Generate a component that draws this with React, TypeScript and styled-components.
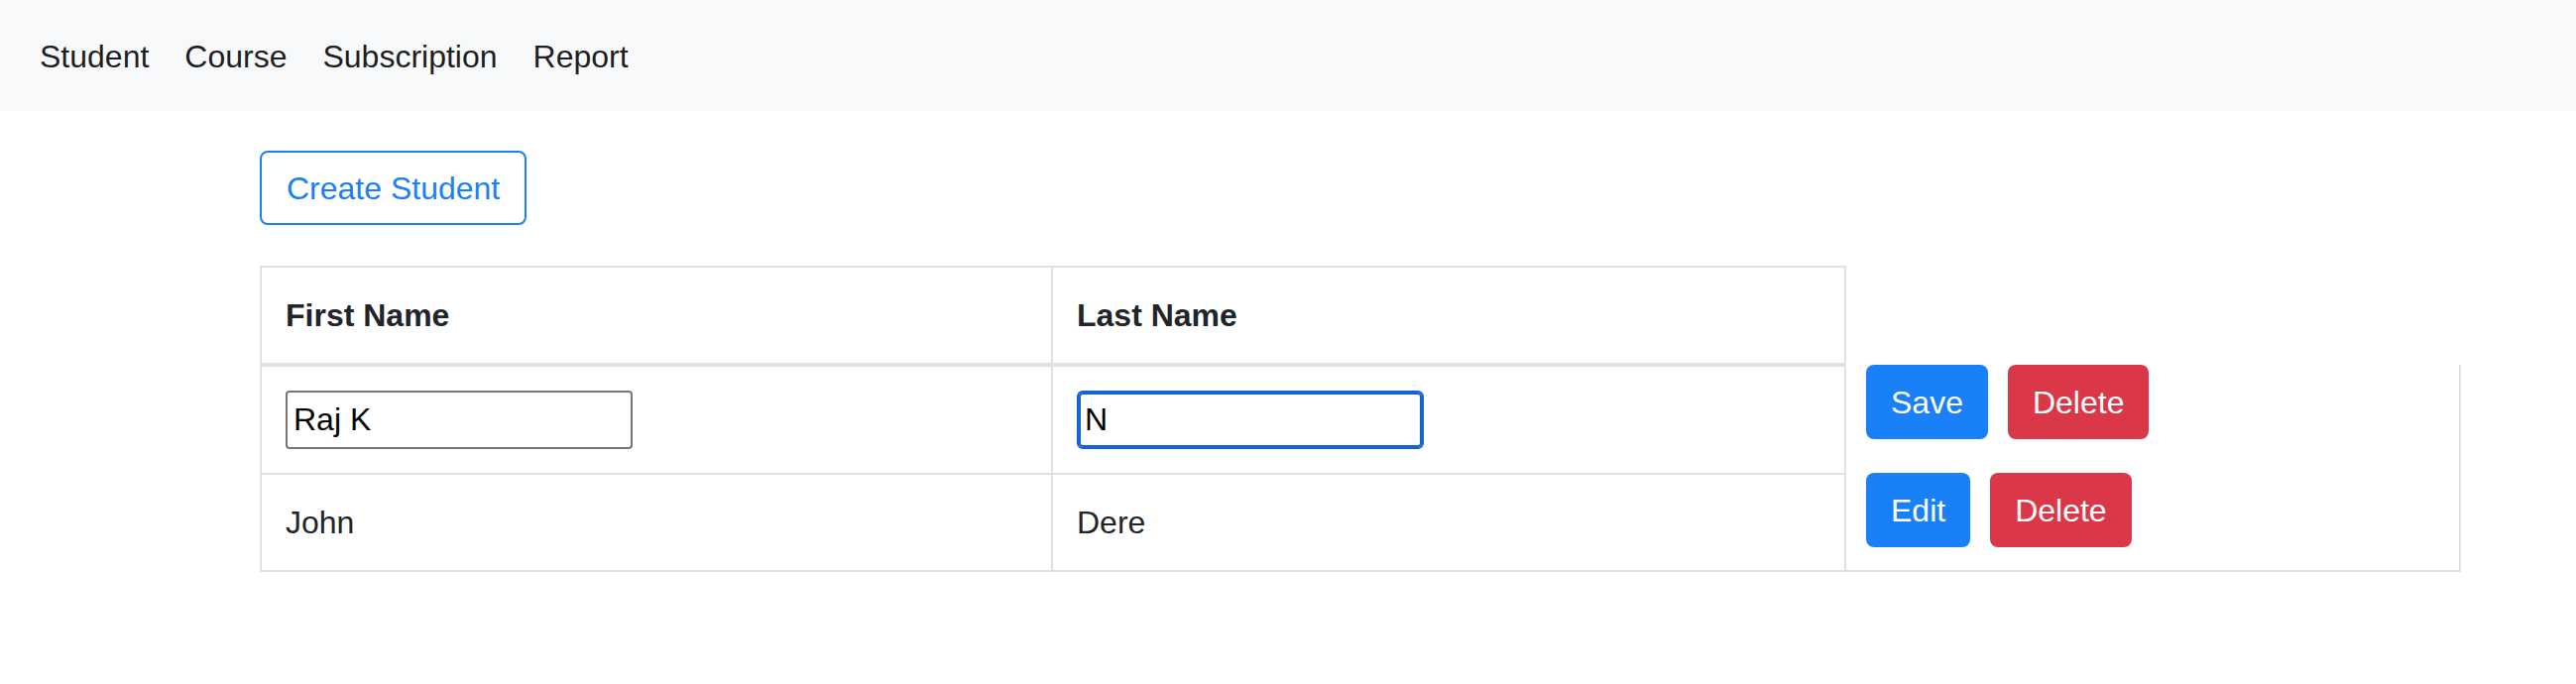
import React from 'react';
import styled, { createGlobalStyle } from 'styled-components';

interface Student {
  id: number;
  firstName: string;
  lastName: string;
  editing: boolean;
}

const students: Student[] = [
  { id: 1, firstName: 'Raj K', lastName: 'N', editing: true },
  { id: 2, firstName: 'John', lastName: 'Dere', editing: false },
];

const navItems = ['Student', 'Course', 'Subscription', 'Report'];

const App = () => {
  return (
    <>
      <GlobalStyle />
      <S.Navbar>
        {navItems.map((item) => (
          <S.NavLink key={item} href="#">
            {item}
          </S.NavLink>
        ))}
      </S.Navbar>

      <S.Main>
        <S.OutlineButton type="button">Create Student</S.OutlineButton>

        <S.Table role="table">
          <S.HeadCell role="columnheader">First Name</S.HeadCell>
          <S.HeadCell role="columnheader" $last>
            Last Name
          </S.HeadCell>
          <S.EmptyHead />

          {students.map((student, index) => {
            const isLast = index === students.length - 1;
            return (
              <React.Fragment key={student.id}>
                <S.Cell role="cell">
                  {student.editing ? (
                    <S.Input defaultValue={student.firstName} />
                  ) : (
                    student.firstName
                  )}
                </S.Cell>
                <S.Cell role="cell" $right>
                  {student.editing ? (
                    <S.Input defaultValue={student.lastName} $focused />
                  ) : (
                    student.lastName
                  )}
                </S.Cell>
                <S.ActionCell role="cell" $last={isLast}>
                  <S.Button $variant="primary">
                    {student.editing ? 'Save' : 'Edit'}
                  </S.Button>
                  <S.Button $variant="danger">Delete</S.Button>
                </S.ActionCell>
              </React.Fragment>
            );
          })}
        </S.Table>
      </S.Main>
    </>
  );
};

const GlobalStyle = createGlobalStyle`
  * {
    box-sizing: border-box;
  }
  body {
    margin: 0;
    background: #ffffff;
    color: #212529;
    font-family: "Liberation Sans", Arial, sans-serif;
    font-size: 32px;
    line-height: 48px;
  }
`;

const border = '#dee2e6';

const S = {
  Navbar: styled.nav`
    display: flex;
    align-items: flex-start;
    height: 112px;
    padding: 33px 0 0 22px;
    background: #f8f9fa;
  `,
  NavLink: styled.a`
    padding: 0 18px;
    font-size: 32px;
    line-height: 48px;
    color: rgba(0, 0, 0, 0.9);
    text-decoration: none;
  `,
  Main: styled.main`
    display: flex;
    flex-direction: column;
    align-items: flex-start;
    gap: 41px;
    padding: 40px 0 0 262px;
  `,
  OutlineButton: styled.button`
    height: 75px;
    padding: 0 25px;
    border: 2px solid #1a80f7;
    border-radius: 8px;
    background: transparent;
    color: #1a80f7;
    font-family: inherit;
    font-size: 32px;
    line-height: 48px;
  `,
  Table: styled.div`
    display: grid;
    grid-template-columns: 798px 802px 620px;
  `,
  HeadCell: styled.div<{ $last?: boolean }>`
    padding: 24px 24px;
    border-top: 2px solid ${border};
    border-left: 2px solid ${border};
    border-right: ${(p) => (p.$last ? `2px solid ${border}` : '0')};
    border-bottom: 4px solid ${border};
    font-weight: 700;
    line-height: 48px;
  `,
  EmptyHead: styled.div``,
  Cell: styled.div<{ $right?: boolean }>`
    display: flex;
    align-items: center;
    min-height: 96px;
    padding: 24px 24px;
    border-left: 2px solid ${border};
    border-right: ${(p) => (p.$right ? `2px solid ${border}` : '0')};
    border-bottom: 2px solid ${border};
    line-height: 48px;
  `,
  Input: styled.input<{ $focused?: boolean }>`
    width: 350px;
    height: 59px;
    padding: 0 6px;
    border: 2px solid ${(p) => (p.$focused ? '#1463d6' : '#767676')};
    border-radius: ${(p) => (p.$focused ? '6px' : '4px')};
    box-shadow: ${(p) => (p.$focused ? 'inset 0 0 0 2px #1463d6' : 'none')};
    outline: none;
    color: #000000;
    font-family: inherit;
    font-size: 32px;
  `,
  ActionCell: styled.div<{ $last?: boolean }>`
    display: flex;
    align-items: flex-start;
    gap: 20px;
    margin-top: -2px;
    padding: 0 20px;
    border-right: 2px solid ${border};
    border-bottom: ${(p) => (p.$last ? `2px solid ${border}` : '0')};
  `,
  Button: styled.button<{ $variant: 'primary' | 'danger' }>`
    height: 75px;
    padding: 0 25px;
    border: 0;
    border-radius: 8px;
    background: ${(p) => (p.$variant === 'primary' ? '#1a80f7' : '#da3849')};
    color: #ffffff;
    font-family: inherit;
    font-size: 32px;
    line-height: 48px;
  `,
};

export default App;
